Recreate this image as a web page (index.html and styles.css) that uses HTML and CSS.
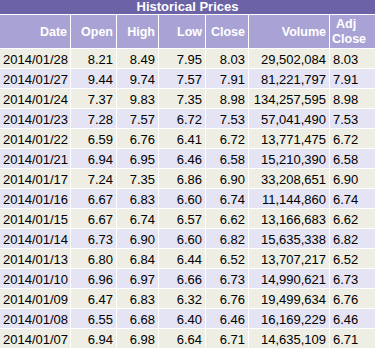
FILE: index.html
```html
<!DOCTYPE html>
<html>
<head>
<meta charset="utf-8">
<link rel="stylesheet" href="styles.css">
</head>
<body>
<div class="title">Historical Prices</div>
<table class="prices">
  <thead>
    <tr>
      <th class="c-date">Date</th>
      <th class="c-open">Open</th>
      <th class="c-high">High</th>
      <th class="c-low">Low</th>
      <th class="c-close">Close</th>
      <th class="c-vol">Volume</th>
      <th class="c-adj">Adj Close</th>
    </tr>
  </thead>
  <tbody>
    <tr><td>2014/01/28</td><td>8.21</td><td>8.49</td><td>7.95</td><td>8.03</td><td>29,502,084</td><td class="adj">8.03</td></tr>
    <tr><td>2014/01/27</td><td>9.44</td><td>9.74</td><td>7.57</td><td>7.91</td><td>81,221,797</td><td class="adj">7.91</td></tr>
    <tr><td>2014/01/24</td><td>7.37</td><td>9.83</td><td>7.35</td><td>8.98</td><td>134,257,595</td><td class="adj">8.98</td></tr>
    <tr><td>2014/01/23</td><td>7.28</td><td>7.57</td><td>6.72</td><td>7.53</td><td>57,041,490</td><td class="adj">7.53</td></tr>
    <tr><td>2014/01/22</td><td>6.59</td><td>6.76</td><td>6.41</td><td>6.72</td><td>13,771,475</td><td class="adj">6.72</td></tr>
    <tr><td>2014/01/21</td><td>6.94</td><td>6.95</td><td>6.46</td><td>6.58</td><td>15,210,390</td><td class="adj">6.58</td></tr>
    <tr><td>2014/01/17</td><td>7.24</td><td>7.35</td><td>6.86</td><td>6.90</td><td>33,208,651</td><td class="adj">6.90</td></tr>
    <tr><td>2014/01/16</td><td>6.67</td><td>6.83</td><td>6.60</td><td>6.74</td><td>11,144,860</td><td class="adj">6.74</td></tr>
    <tr><td>2014/01/15</td><td>6.67</td><td>6.74</td><td>6.57</td><td>6.62</td><td>13,166,683</td><td class="adj">6.62</td></tr>
    <tr><td>2014/01/14</td><td>6.73</td><td>6.90</td><td>6.60</td><td>6.82</td><td>15,635,338</td><td class="adj">6.82</td></tr>
    <tr><td>2014/01/13</td><td>6.80</td><td>6.84</td><td>6.44</td><td>6.52</td><td>13,707,217</td><td class="adj">6.52</td></tr>
    <tr><td>2014/01/10</td><td>6.96</td><td>6.97</td><td>6.66</td><td>6.73</td><td>14,990,621</td><td class="adj">6.73</td></tr>
    <tr><td>2014/01/09</td><td>6.47</td><td>6.83</td><td>6.32</td><td>6.76</td><td>19,499,634</td><td class="adj">6.76</td></tr>
    <tr><td>2014/01/08</td><td>6.55</td><td>6.68</td><td>6.40</td><td>6.46</td><td>16,169,229</td><td class="adj">6.46</td></tr>
    <tr><td>2014/01/07</td><td>6.94</td><td>6.98</td><td>6.64</td><td>6.71</td><td>14,635,109</td><td class="adj">6.71</td></tr>
  </tbody>
</table>
</body>
</html>
```
FILE: styles.css
```css
html, body {
  margin: 0;
  padding: 0;
  overflow: hidden;
  background: #ffffff;
}

body {
  font-family: "Liberation Sans", Arial, sans-serif;
  width: 375px;
}

.title {
  height: 14px;
  line-height: 14px;
  background: #6b63a6;
  color: #ffffff;
  font-weight: bold;
  font-size: 13px;
  text-align: center;
}

.prices {
  border-collapse: separate;
  border-spacing: 1px;
  margin-left: -1px;
  table-layout: fixed;
  width: 378px;
  background: #ffffff;
}

.prices th,
.prices td {
  box-sizing: border-box;
  padding: 0 3px;
  text-align: right;
  white-space: nowrap;
}

.prices th {
  height: 33px;
  background: #a9a3d5;
  color: #ffffff;
  font-weight: bold;
  font-size: 12.5px;
  line-height: 15px;
  vertical-align: middle;
  padding-top: 1px;
}

.prices th.c-adj {
  white-space: normal;
  text-align: left;
  text-indent: 4px;
  padding-left: 2px;
}

.c-date { width: 70px; }
.c-open { width: 45px; }
.c-high { width: 41px; }
.c-low { width: 46px; }
.c-close { width: 42px; }
.c-vol { width: 80px; }
.c-adj { width: 47px; }

.prices td {
  height: 19px;
  font-size: 13px;
  line-height: 15px;
  color: #000000;
  padding-top: 2px;
  padding-bottom: 0;
  vertical-align: middle;
}

.prices td.adj {
  text-align: left;
}

.prices tbody tr:nth-child(odd) td {
  background: #eeeee4;
}

.prices tbody tr:nth-child(even) td {
  background: #e5e4f4;
}
```
